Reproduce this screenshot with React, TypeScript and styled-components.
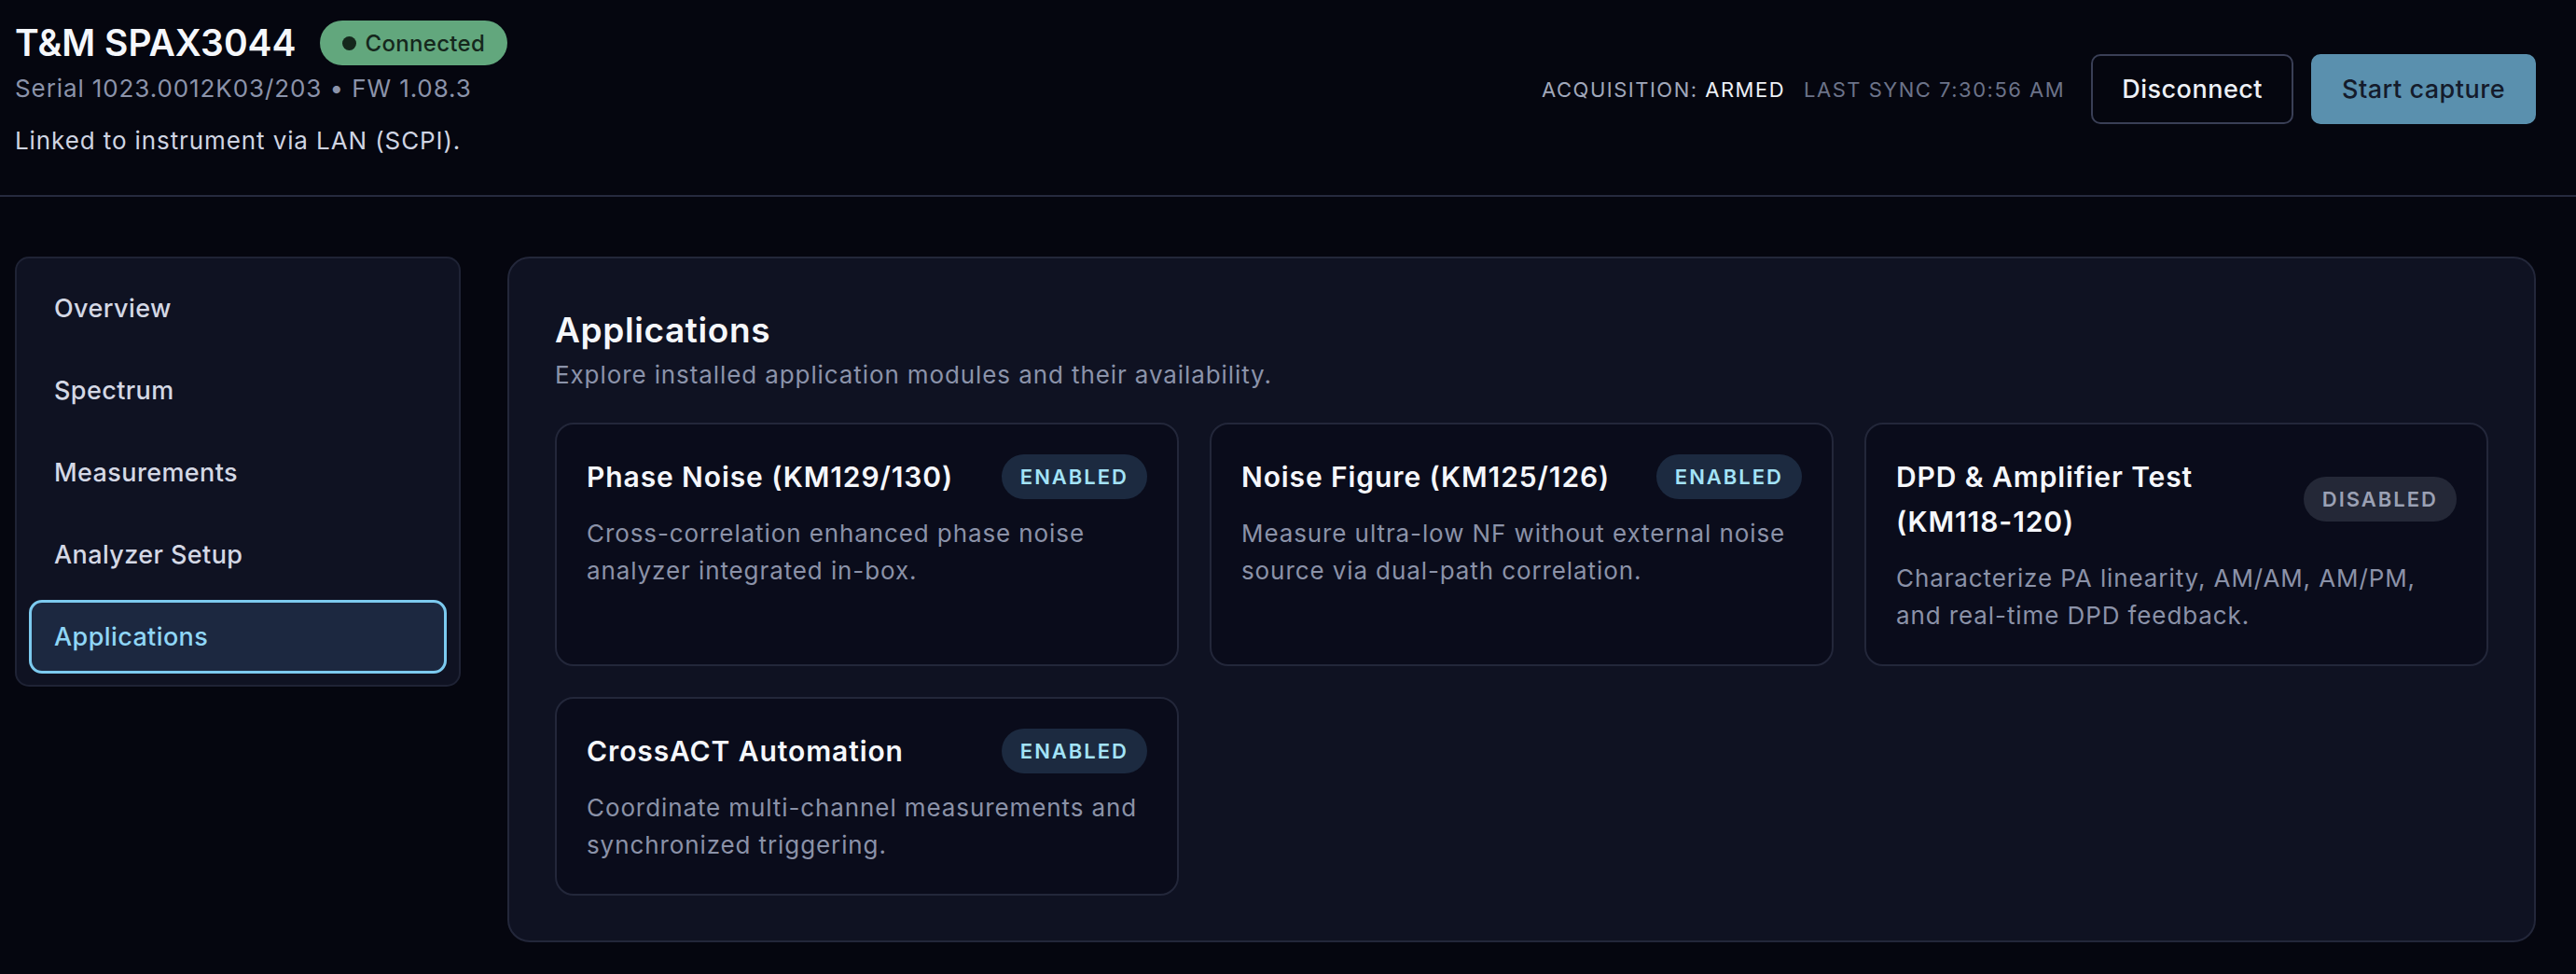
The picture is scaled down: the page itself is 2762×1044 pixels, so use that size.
import React from "react";
import styled, { createGlobalStyle } from "styled-components";

const Global = createGlobalStyle`
  html, body { margin: 0; padding: 0; background: #05060f; }
  body { font-family: Inter, "Noto Sans", sans-serif; color: #e6e9f2; }
  * { box-sizing: border-box; }
`;

const Page = styled.div`
  min-height: 1044px;
  background: #05060f;
  padding: 0 43px 0 16px;
`;

const Header = styled.header`
  display: flex;
  align-items: center;
  justify-content: space-between;
  padding: 22px 43px 40px 16px;
  border-bottom: 2px solid #262a3e;
  margin: 0 -43px 0 -16px;
`;

const Identity = styled.div`
  display: flex;
  flex-direction: column;
`;

const TitleRow = styled.div`
  display: flex;
  align-items: center;
  gap: 25px;
  height: 48px;
`;

const Title = styled.h1`
  margin: 0;
  font-size: 39px;
  font-weight: 600;
  color: #f5f7fb;
  letter-spacing: 0;
  line-height: 48px;
`;

const StatusPill = styled.span`
  display: inline-flex;
  align-items: center;
  gap: 10px;
  height: 48px;
  padding: 0 24px;
  border-radius: 999px;
  background: #62a77d;
  color: #15271c;
  font-size: 24px;
  font-weight: 500;
  letter-spacing: 0.3px;
`;

const Dot = styled.span`
  width: 15px;
  height: 15px;
  border-radius: 50%;
  background: #15271c;
`;

const Meta = styled.div`
  margin-top: 6px;
  font-size: 26px;
  letter-spacing: 0.9px;
  line-height: 37px;
  color: #8b93aa;
`;

const Linked = styled.div`
  margin-top: 19px;
  font-size: 26px;
  letter-spacing: 0.9px;
  line-height: 37px;
  color: #cfd4e2;
`;

const Controls = styled.div`
  display: flex;
  align-items: center;
`;

const StatusText = styled.div`
  display: flex;
  align-items: center;
  gap: 20px;
  margin-right: 28px;
  font-size: 22px;
  letter-spacing: 1.5px;
  text-transform: uppercase;
`;

const StatusLabel = styled.span<{ $dim?: boolean }>`
  color: ${(p) => (p.$dim ? "#6c7389" : "#a1a8bb")};
`;

const StatusValue = styled.span`
  color: #eef1f7;
`;

const Button = styled.button<{ $primary?: boolean }>`
  height: 75px;
  padding: 0 31px;
  border-radius: 10px;
  font-family: Inter, sans-serif;
  font-size: 27px;
  font-weight: 500;
  letter-spacing: 0.5px;
  cursor: pointer;
  border: 2px solid ${(p) => (p.$primary ? "#5a90ae" : "#3a3f56")};
  background: ${(p) => (p.$primary ? "#5a90ae" : "transparent")};
  color: ${(p) => (p.$primary ? "#141b2b" : "#eef1f7")};
  & + & { margin-left: 19px; }
`;

const Body = styled.div`
  display: flex;
  align-items: flex-start;
  gap: 50px;
  padding-top: 64px;
`;

const Sidebar = styled.nav`
  width: 478px;
  flex: none;
  display: flex;
  flex-direction: column;
  gap: 9px;
  padding: 14px 13px 12px 13px;
  background: #0f1222;
  border: 2px solid #1f2335;
  border-radius: 15px;
`;

const NavItem = styled.div<{ $active?: boolean }>`
  height: 79px;
  display: flex;
  align-items: center;
  padding-left: 24px;
  font-size: 27px;
  font-weight: 500;
  letter-spacing: 0.4px;
  border-radius: 14px;
  border: 3px solid ${(p) => (p.$active ? "#7ccaef" : "transparent")};
  background: ${(p) => (p.$active ? "#1c2840" : "transparent")};
  color: ${(p) => (p.$active ? "#8fd6f6" : "#d4d8e5")};
`;

const Panel = styled.main`
  flex: 1;
  min-width: 0;
  background: #0f1222;
  border: 2px solid #23273a;
  border-radius: 24px;
  padding: 55px 49px 48px 49px;
`;

const PanelTitle = styled.h2`
  margin: 0;
  font-size: 37px;
  font-weight: 600;
  letter-spacing: 0.6px;
  line-height: 44px;
  color: #f5f7fb;
`;

const PanelSubtitle = styled.p`
  margin: 7px 0 0 0;
  font-size: 26px;
  letter-spacing: 0.9px;
  line-height: 37px;
  color: #8b93aa;
`;

const Grid = styled.div`
  margin-top: 33px;
  display: grid;
  grid-template-columns: repeat(3, 1fr);
  gap: 33px;
`;

const Card = styled.div`
  background: #0a0c1b;
  border: 2px solid #23273a;
  border-radius: 20px;
  padding: 32px;
  display: flex;
  flex-direction: column;
  gap: 17px;
`;

const CardHead = styled.div`
  display: flex;
  align-items: center;
  justify-content: space-between;
  gap: 24px;
`;

const CardTitle = styled.h3`
  margin: 0;
  font-size: 30px;
  font-weight: 600;
  letter-spacing: 0.9px;
  line-height: 48px;
  color: #f5f7fb;
`;

const Code = styled.span`
  white-space: nowrap;
`;

const Tag = styled.span<{ $on: boolean }>`
  flex: none;
  height: 48px;
  display: inline-flex;
  align-items: center;
  padding: 0 20px;
  border-radius: 999px;
  font-size: 22px;
  font-weight: 600;
  letter-spacing: 2px;
  background: ${(p) => (p.$on ? "#1c2a40" : "#242837")};
  color: ${(p) => (p.$on ? "#a3e3f7" : "#9ba1b4")};
`;

const CardText = styled.p`
  margin: 0;
  font-size: 26px;
  letter-spacing: 0.9px;
  line-height: 40px;
  color: #8b92a8;
`;

const navItems = ["Overview", "Spectrum", "Measurements", "Analyzer Setup", "Applications"];

const apps = [
  {
    name: "Phase Noise",
    code: "KM129/130",
    on: true,
    text: "Cross-correlation enhanced phase noise analyzer integrated in-box.",
  },
  {
    name: "Noise Figure",
    code: "KM125/126",
    on: true,
    text: "Measure ultra-low NF without external noise source via dual-path correlation.",
  },
  {
    name: "DPD & Amplifier Test",
    code: "KM118-120",
    on: false,
    text: "Characterize PA linearity, AM/AM, AM/PM, and real-time DPD feedback.",
  },
  {
    name: "CrossACT Automation",
    code: "",
    on: true,
    text: "Coordinate multi-channel measurements and synchronized triggering.",
  },
];

export default function App() {
  return (
    <>
      <Global />
      <Page>
        <Header>
          <Identity>
            <TitleRow>
              <Title>T&amp;M SPAX3044</Title>
              <StatusPill>
                <Dot />
                Connected
              </StatusPill>
            </TitleRow>
            <Meta>Serial 1023.0012K03/203 • FW 1.08.3</Meta>
            <Linked>Linked to instrument via LAN (SCPI).</Linked>
          </Identity>
          <Controls>
            <StatusText>
              <StatusLabel>
                Acquisition: <StatusValue>Armed</StatusValue>
              </StatusLabel>
              <StatusLabel $dim>Last sync 7:30:56 AM</StatusLabel>
            </StatusText>
            <Button>Disconnect</Button>
            <Button $primary>Start capture</Button>
          </Controls>
        </Header>
        <Body>
          <Sidebar>
            {navItems.map((n) => (
              <NavItem key={n} $active={n === "Applications"}>
                {n}
              </NavItem>
            ))}
          </Sidebar>
          <Panel>
            <PanelTitle>Applications</PanelTitle>
            <PanelSubtitle>Explore installed application modules and their availability.</PanelSubtitle>
            <Grid>
              {apps.map((a) => (
                <Card key={a.name}>
                  <CardHead>
                    <CardTitle>
                      {a.name}
                      {a.code ? (
                        <>
                          {" "}
                          <Code>({a.code})</Code>
                        </>
                      ) : null}
                    </CardTitle>
                    <Tag $on={a.on}>{a.on ? "ENABLED" : "DISABLED"}</Tag>
                  </CardHead>
                  <CardText>{a.text}</CardText>
                </Card>
              ))}
            </Grid>
          </Panel>
        </Body>
      </Page>
    </>
  );
}
